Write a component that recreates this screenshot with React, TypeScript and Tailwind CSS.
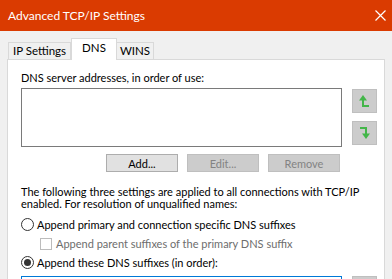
import React from "react";

function UpArrow() {
  return (
    <svg width="12" height="14" viewBox="0 0 12 14">
      <path d="M4 13 V5 M4 12 H10" stroke="#43b649" strokeWidth="2" fill="none" />
      <path d="M0 6.5 L4 1 L8 6.5 Z" fill="#43b649" />
    </svg>
  );
}

function DownArrow() {
  return (
    <svg width="12" height="14" viewBox="0 0 12 14">
      <path d="M1 2 H7 V9" stroke="#43b649" strokeWidth="2" fill="none" />
      <path d="M3 7.5 L7 13 L11 7.5 Z" fill="#43b649" />
    </svg>
  );
}

function Radio({ checked }: { checked?: boolean }) {
  return (
    <span className="w-[13px] h-[13px] rounded-full border border-[#333] bg-white flex items-center justify-center shrink-0">
      {checked && <span className="w-[7px] h-[7px] rounded-full bg-[#333]" />}
    </span>
  );
}

export default function App() {
  return (
    <div
      className="w-[392px] h-[279px] overflow-hidden bg-[#f0f0f0] text-[11px] text-black whitespace-nowrap"
      style={{ fontFamily: 'Lato, "Noto Sans", sans-serif' }}
    >
      {/* title bar */}
      <div className="h-[31px] bg-[#da3b01] flex items-center justify-between pl-[8px] pr-[4px] text-white">
        <span className="leading-none text-[12px]">Advanced TCP/IP Settings</span>
        <svg width="11" height="11" viewBox="0 0 11 11" className="mr-[2px]">
          <path d="M0.5 0.5 L10.5 10.5 M10.5 0.5 L0.5 10.5" stroke="white" strokeWidth="1.2" />
        </svg>
      </div>

      {/* tabs */}
      <div className="flex items-end pl-[8px] h-[28px] relative z-10 text-[11.5px]">
        <div className="h-[17px] w-[63px] border border-b-0 border-[#d9d9d9] bg-[#f0f0f0] flex items-center justify-center leading-none">
          IP Settings
        </div>
        <div className="h-[22px] w-[46px] border border-b-0 border-[#d9d9d9] bg-white flex items-start justify-center pt-[3px] -mb-[1px] leading-none">
          DNS
        </div>
        <div className="h-[17px] w-[37px] border border-b-0 border-l-0 border-[#d9d9d9] bg-[#f0f0f0] flex items-center justify-center leading-none">
          WINS
        </div>
      </div>

      {/* tab page */}
      <div className="mx-[7px] border border-[#d9d9d9] bg-white h-[230px] pl-[13px] pt-[11px]">
        <div className="leading-[14px]">DNS server addresses, in order of use:</div>

        <div className="flex mt-[3px]">
          <div className="w-[321px] h-[59px] border border-[#7a7a7a] bg-white" />
          <div className="flex flex-col gap-[8px] ml-[10px] mt-[1px]">
            <div className="w-[25px] h-[24px] bg-[#cccccc] border border-[#bfbfbf] flex items-center justify-center">
              <UpArrow />
            </div>
            <div className="w-[25px] h-[24px] bg-[#cccccc] border border-[#bfbfbf] flex items-center justify-center">
              <DownArrow />
            </div>
          </div>
        </div>

        <div className="flex gap-[9px] ml-[85px] mt-[7px]">
          <div className="w-[72px] h-[18px] bg-[#e1e1e1] border border-[#adadad] flex items-center justify-center leading-none">
            Add...
          </div>
          <div className="w-[72px] h-[18px] bg-[#cccccc] border border-[#bfbfbf] text-[#838383] flex items-center justify-center leading-none">
            Edit...
          </div>
          <div className="w-[72px] h-[18px] bg-[#cccccc] border border-[#bfbfbf] text-[#838383] flex items-center justify-center leading-none">
            Remove
          </div>
        </div>

        <div className="mt-[14px] leading-[12px]">
          <div>The following three settings are applied to all connections with TCP/IP</div>
          <div>enabled. For resolution of unqualified names:</div>
        </div>

        <div className="flex items-center gap-[3px] mt-[7px] h-[14px]">
          <Radio />
          <span className="leading-none">Append primary and connection specific DNS suffixes</span>
        </div>

        <div className="flex items-center gap-[4px] ml-[19px] mt-[6px] h-[13px]">
          <span className="w-[12px] h-[12px] border border-[#bcbcbc] bg-white shrink-0" />
          <span className="leading-none text-[#6d6d6d]">Append parent suffixes of the primary DNS suffix</span>
        </div>

        <div className="flex items-center gap-[3px] mt-[5px] h-[14px]">
          <Radio checked />
          <span className="leading-none">Append these DNS suffixes (in order):</span>
        </div>

        <div className="flex mt-[7px]">
          <div className="w-[321px] h-[40px] border border-[#0078d7] bg-white" />
          <div className="w-[25px] h-[24px] ml-[10px] bg-[#cccccc] border border-[#bfbfbf]" />
        </div>
      </div>
    </div>
  );
}
